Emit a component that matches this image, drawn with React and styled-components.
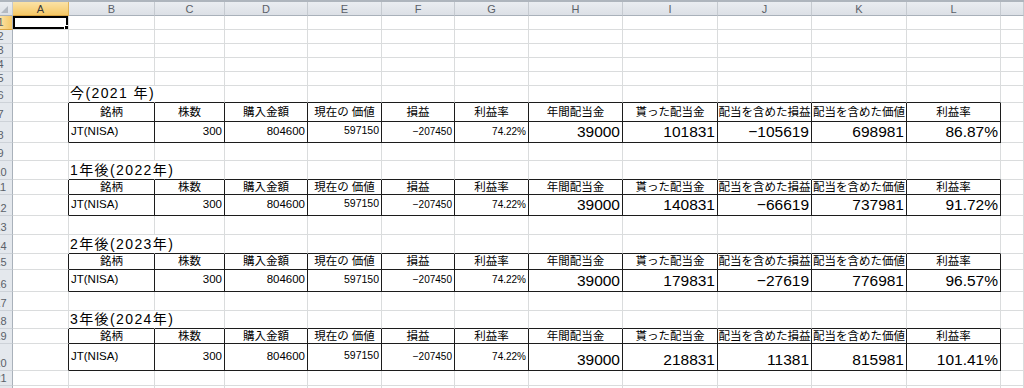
import React from "react";
import styled, { createGlobalStyle } from "styled-components";

const GlobalStyle = createGlobalStyle`
    body {
        margin: 0;
        background: #ffffff;
    }
`;

const COLS = "13px 56px 86px 70px 83px 74px 73px 74px 94px 95px 94px 95px 94px 1fr";
const LETTERS = ["A", "B", "C", "D", "E", "F", "G", "H", "I", "J", "K", "L", ""];
const GRID = "#dadcdd";
const INK = "#1c1c1c";

const HEADERS = [
    "銘柄", "株数", "購入金額", "現在の 価値", "損益", "利益率",
    "年間配当金", "貰った配当金", "配当を含めた損益", "配当を含めた価値", "利益率"
];

const FIXED = [
    {v: "JT(NISA)", size: 11.5, align: "flex-start"},
    {v: "300", size: 11.5},
    {v: "804600", size: 11.5},
    {v: "597150", size: 10.5},
    {v: "−207450", size: 10},
    {v: "74.22%", size: 10}
];

const TABLES = [
    {title: "今(2021 年)", vals: ["39000", "101831", "−105619", "698981", "86.87%"]},
    {title: "1年後(2022年)", vals: ["39000", "140831", "−66619", "737981", "91.72%"]},
    {title: "2年後(2023年)", vals: ["39000", "179831", "−27619", "776981", "96.57%"]},
    {title: "3年後(2024年)", vals: ["39000", "218831", "11381", "815981", "101.41%"]}
];

const ROWS = [
    {h: 14}, {h: 14}, {h: 14}, {h: 14}, {h: 14},
    {h: 17, t: 0, kind: "title"}, {h: 19, t: 0, kind: "head"}, {h: 21, t: 0, kind: "data"},
    {h: 18}, {h: 19, t: 1, kind: "title"}, {h: 15, t: 1, kind: "head"}, {h: 21, t: 1, kind: "data"},
    {h: 19}, {h: 19, t: 2, kind: "title"}, {h: 16, t: 2, kind: "head"}, {h: 22, t: 2, kind: "data"},
    {h: 19}, {h: 18, t: 3, kind: "title"}, {h: 15, t: 3, kind: "head"}, {h: 27, t: 3, kind: "data"},
    {h: 15}, {h: 15}
];

const Sheet = styled.div`
    width: 1024px;
    height: 388px;
    overflow: hidden;
    background: #ffffff;
    color: #000000;
    font-family: "Liberation Sans", "Noto Sans CJK JP", sans-serif;
`;

const Row = styled.div`
    display: grid;
    grid-template-columns: ${COLS};
    height: ${({$h}) => $h}px;
`;

const ColHeadRow = styled(Row)`
    box-sizing: border-box;
    border-top: 2px solid #aeb5bd;
`;

const ColHead = styled.div`
    box-sizing: border-box;
    display: flex;
    align-items: center;
    justify-content: center;
    font-size: 11px;
    color: ${({$active}) => $active ? "#3a3a3a" : "#5a6068"};
    background: ${({$active}) => $active
        ? "linear-gradient(#fbe2a6, #f5c866)"
        : "linear-gradient(#eaedf1, #dce0e6)"};
    border-right: 1px solid ${({$active}) => $active ? "#e1b45a" : "#c5cad0"};
    border-bottom: 1px solid ${({$active}) => $active ? "#d9a441" : "#a9b1ba"};
`;

const Corner = styled(ColHead)`
    justify-content: flex-end;
    align-items: flex-end;
    padding: 0 4px 2px 0;
    svg {
        display: block;
    }
`;

const RowHead = styled.div`
    box-sizing: border-box;
    overflow: hidden;
    display: flex;
    align-items: flex-end;
    padding-bottom: 1px;
    font-size: 11px;
    color: #5a6068;
    background: ${({$active}) => $active
        ? "linear-gradient(90deg, #fbe2a6, #f5c866)"
        : "#e4e8ed"};
    border-right: 1px solid #a9b1ba;
    border-bottom: 1px solid ${({$active}) => $active ? "#d9a441" : "#cdd2d8"};
    span {
        flex: none;
        width: 25px;
        margin-left: -12px;
        text-align: center;
    }
`;

const Cell = styled.div`
    position: relative;
    box-sizing: border-box;
    min-width: 0;
    display: flex;
    align-items: ${({$valign}) => $valign || "flex-end"};
    justify-content: ${({$align}) => $align || "flex-end"};
    padding: 0 2px 2px;
    font-size: ${({$size}) => $size || 11.5}px;
    line-height: 1.1;
    white-space: nowrap;
    overflow: ${({$spill}) => $spill ? "visible" : "hidden"};
    border-right: 1px solid ${({$dr, $nr}) => $dr ? INK : $nr ? "transparent" : GRID};
    border-bottom: 1px solid ${({$db}) => $db ? INK : GRID};
    box-shadow: ${({$active}) => $active ? "inset 0 0 0 2px #000" : "none"};
`;

const Title = styled(Cell)`
    font-size: 14px;
    letter-spacing: 1.4px;
    padding: 0 0 1px 1px;
    z-index: 1;
`;

const Head = styled(Cell)`
    justify-content: center;
    align-items: center;
    padding: 0 1px;
`;

const FillHandle = styled.div`
    position: absolute;
    right: -3px;
    bottom: -3px;
    width: 5px;
    height: 5px;
    background: #000;
    border: 1px solid #fff;
    z-index: 2;
`;

const SelectAll = () => (
    <svg width="7" height="7" viewBox="0 0 7 7">
        <path d="M7 0 L7 7 L0 7 Z" fill="#b4bac2" />
    </svg>
);

const SheetRow = ({row, index}) => {
    const n = index + 1;
    const table = row.t !== undefined ? TABLES[row.t] : null;
    const inTable = row.kind === "head" || row.kind === "data";
    const cells = [];

    cells.push(
        <Cell key="A" $active={n === 1} $dr={inTable}>
            {n === 1 && <FillHandle />}
        </Cell>
    );

    for (let c = 0; c < 11; c++) {
        if (row.kind === "title") {
            cells.push(c === 0
                ? <Title key={c} $align="flex-start" $spill $nr $db>{table.title}</Title>
                : <Cell key={c} $db />);
        } else if (row.kind === "head") {
            cells.push(<Head key={c} $dr $db>{HEADERS[c]}</Head>);
        } else if (row.kind === "data") {
            if (c < 6) {
                const f = FIXED[c];
                cells.push(
                    <Cell key={c} $dr $db $size={f.size} $align={f.align} $valign="center">
                        {f.v}
                    </Cell>
                );
            } else {
                cells.push(
                    <Cell key={c} $dr $db $size={15.5} $valign="flex-end">
                        {table.vals[c - 6]}
                    </Cell>
                );
            }
        } else {
            cells.push(<Cell key={c} />);
        }
    }
    cells.push(<Cell key="M" />);

    return (
        <Row $h={row.h}>
            <RowHead $active={n === 1}><span>{n}</span></RowHead>
            {cells}
        </Row>
    );
};

const App = () => (
    <Sheet>
        <GlobalStyle />
        <ColHeadRow $h={16}>
            <Corner><SelectAll /></Corner>
            {LETTERS.map((l, i) => (
                <ColHead key={i} $active={l === "A"}>{l}</ColHead>
            ))}
        </ColHeadRow>
        {ROWS.map((row, i) => <SheetRow key={i} row={row} index={i} />)}
    </Sheet>
);

export default App;
